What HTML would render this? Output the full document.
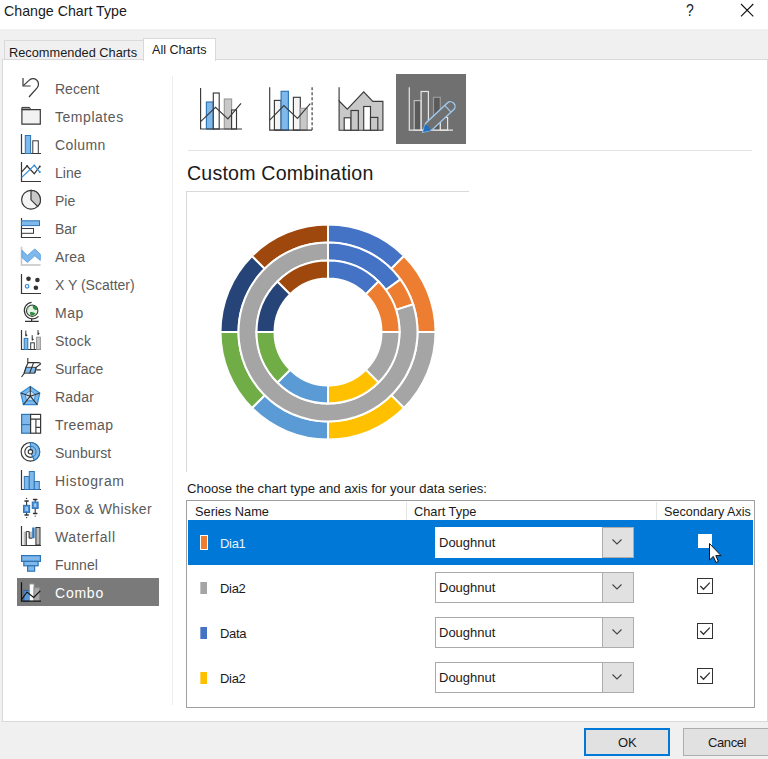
<!DOCTYPE html>
<html><head><meta charset="utf-8">
<style>
*{box-sizing:border-box}
html,body{margin:0;padding:0;width:768px;height:759px;overflow:hidden;background:#f0f0f0;font-family:"Liberation Sans",sans-serif;color:#000}
.a{position:absolute}
.t{white-space:nowrap;line-height:1}
.cat{left:55px;font-size:14px}
</style></head><body>
<div class="a" style="left:0;top:0;width:768px;height:29px;background:#fff"></div>
<div class="a t" style="left:4px;top:4px;font-size:14.2px;color:#1a1a1a">Change Chart Type</div>
<div class="a t" style="left:686px;top:2px;font-size:16.5px;color:#1a1a1a;transform:scaleX(0.85);transform-origin:0 0">?</div>
<svg class="a" style="left:740px;top:3px" width="15" height="15"><path d="M1 1L13.3 13.3M13.3 1L1 13.3" stroke="#111" stroke-width="1.1"/></svg>

<div class="a" style="left:4px;top:40px;width:140px;height:20px;background:#f0f0f0;border:1px solid #d9d9d9;border-bottom:none"></div>
<div class="a t" style="left:9px;top:47px;font-size:12.8px;color:#1a1a1a">Recommended Charts</div>

<div class="a" style="left:2px;top:59px;width:766px;height:663px;background:#fff;border:1px solid #d9d9d9"></div>
<div class="a" style="left:143px;top:38px;width:73px;height:23px;background:#fff;border:1px solid #d9d9d9;border-bottom:none"></div>
<div class="a t" style="left:152px;top:44px;font-size:12.6px;color:#1a1a1a">All Charts</div>

<div class="a" style="left:172px;top:76px;width:1px;height:629px;background:#ededed"></div>

<svg class="a" style="left:16px;top:74px" width="32" height="28" viewBox="0 0 32 28"><path d="M7 4V12H14.6" fill="none" stroke="#383838" stroke-width="1.2"/><path d="M7.4 11.6L13 6.4A5.5 5.5 0 0 1 21.3 13.6L13 23" fill="none" stroke="#383838" stroke-width="1.2"/></svg>
<div class="a t cat" style="top:82px;color:#5a5a5a;letter-spacing:0px">Recent</div>
<svg class="a" style="left:16px;top:102px" width="32" height="28" viewBox="0 0 32 28"><path d="M5.9 7.6H24.3V22.2H5.9Z" fill="#f2f2f2" stroke="#383838" stroke-width="1.2"/><path d="M5.9 5.4H13.6L14.6 7.6H5.9Z" fill="#9a9a9a" stroke="#383838" stroke-width="1"/></svg>
<div class="a t cat" style="top:110px;color:#5a5a5a;letter-spacing:0.54px">Templates</div>
<svg class="a" style="left:16px;top:130px" width="32" height="28" viewBox="0 0 32 28"><path d="M5.5 4V23.5H25" fill="none" stroke="#383838" stroke-width="1.2"/><rect x="9.3" y="5.5" width="5.3" height="18" fill="#7fb8ea" stroke="#2e75b6" stroke-width="1"/><rect x="16.8" y="10.8" width="5.5" height="12.7" fill="#fff" stroke="#383838" stroke-width="1"/></svg>
<div class="a t cat" style="top:138px;color:#5a5a5a;letter-spacing:0.42px">Column</div>
<svg class="a" style="left:16px;top:158px" width="32" height="28" viewBox="0 0 32 28"><path d="M5.5 4V23.5H25" fill="none" stroke="#383838" stroke-width="1.2"/><path d="M5.5 14.1L11.1 8L18.3 15.7L23.8 8.5" fill="none" stroke="#383838" stroke-width="1.2"/><path d="M5.5 19.6L18.3 7.4L23.8 14.1" fill="none" stroke="#2e8ad8" stroke-width="1.2"/><circle cx="11.1" cy="8" r="1" fill="#383838"/><circle cx="18.3" cy="7.4" r="1" fill="#2e8ad8"/><circle cx="23.8" cy="14.1" r="1" fill="#2e8ad8"/><circle cx="23.8" cy="8.5" r="1" fill="#383838"/></svg>
<div class="a t cat" style="top:166px;color:#5a5a5a;letter-spacing:0px">Line</div>
<svg class="a" style="left:16px;top:186px" width="32" height="28" viewBox="0 0 32 28"><circle cx="15" cy="13.8" r="9.4" fill="#f4f4f4" stroke="#383838" stroke-width="1.2"/><path d="M15 4.4A9.4 9.4 0 0 1 21.6 20.5L15 13.8Z" fill="#c8c8c8" stroke="#383838" stroke-width="1.2"/></svg>
<div class="a t cat" style="top:194px;color:#5a5a5a;letter-spacing:0px">Pie</div>
<svg class="a" style="left:16px;top:214px" width="32" height="28" viewBox="0 0 32 28"><path d="M5.5 4V23.5H25" fill="none" stroke="#383838" stroke-width="1.2"/><rect x="5.5" y="6.8" width="18" height="4.8" fill="#7fb8ea" stroke="#2e75b6" stroke-width="1"/><rect x="5.5" y="14.5" width="12" height="4.8" fill="#fff" stroke="#383838" stroke-width="1"/></svg>
<div class="a t cat" style="top:222px;color:#5a5a5a;letter-spacing:0px">Bar</div>
<svg class="a" style="left:16px;top:242px" width="32" height="28" viewBox="0 0 32 28"><path d="M5.5 4.8V23H24.6" fill="none" stroke="#c4c4c4" stroke-width="1.5"/><path d="M6 8.3L11.4 13.6L18.8 7L24.3 12.2V18.4L18.8 13.8L11.4 20.4L6 15.6Z" fill="#7fb8ea" stroke="#5a9fe0" stroke-width="0.9"/></svg>
<div class="a t cat" style="top:250px;color:#5a5a5a;letter-spacing:0.15px">Area</div>
<svg class="a" style="left:16px;top:270px" width="32" height="28" viewBox="0 0 32 28"><path d="M5.5 4V23.5H25" fill="none" stroke="#383838" stroke-width="1.2"/><circle cx="12.5" cy="8.8" r="2.3" fill="#333"/><circle cx="21.4" cy="10" r="2.3" fill="#333"/><circle cx="19.9" cy="17.7" r="2.3" fill="#333"/><circle cx="11.1" cy="16.3" r="1.8" fill="#fff" stroke="#2e8ad8" stroke-width="1.2"/></svg>
<div class="a t cat" style="top:278px;color:#5a5a5a;letter-spacing:0px">X Y (Scatter)</div>
<svg class="a" style="left:16px;top:298px" width="32" height="28" viewBox="0 0 32 28"><path d="M15.6 4.3A8.3 8.3 0 1 0 22.5 18.4" fill="none" stroke="#333" stroke-width="1.2"/><circle cx="16.2" cy="12.7" r="5.7" fill="#e4f2e4" stroke="#2f3b2f" stroke-width="1.1"/><path d="M16.5 7.6Q20.5 7.8 21.3 11.4Q19 12.8 17.2 10.6Z" fill="#2f8a3f"/><path d="M13.8 14.2Q17 13.2 19.6 15.6Q17.5 18 14.6 17.4Z" fill="#2f8a3f"/><path d="M11 10.5Q12 8.5 13 8.2L12 12Z" fill="#6fb37a"/><path d="M9 23.4H22.7M15.6 20.5V23.4" stroke="#333" stroke-width="1.2"/></svg>
<div class="a t cat" style="top:306px;color:#5a5a5a;letter-spacing:0.5px">Map</div>
<svg class="a" style="left:16px;top:326px" width="32" height="28" viewBox="0 0 32 28"><path d="M5.5 4V23.5H25" fill="none" stroke="#383838" stroke-width="1.2"/><rect x="8.2" y="12.4" width="3.6" height="11.1" fill="#7fb8ea" stroke="#2e75b6" stroke-width="1"/><rect x="14.7" y="16.8" width="3.6" height="6.7" fill="#fff" stroke="#383838" stroke-width="1"/><rect x="20.6" y="11.2" width="3.8" height="12.3" fill="#c8c8c8" stroke="#999" stroke-width="1"/><path d="M9.8 4.6V10.2M16.2 9.2V14.4M22 4.2V9" fill="none" stroke="#333" stroke-width="1"/><path d="M9.8 7.8L11.6 9.2L9.8 10.4ZM16.2 12L18 13.4L16.2 14.6ZM22 6.2L23.8 7.6L22 8.8Z" fill="#333"/></svg>
<div class="a t cat" style="top:334px;color:#5a5a5a;letter-spacing:0.25px">Stock</div>
<svg class="a" style="left:16px;top:354px" width="32" height="28" viewBox="0 0 32 28"><path d="M11.8 4V9" stroke="#333" stroke-width="1.1"/><path d="M10.3 13.3H20.2L18.8 19.2H8.1Z" fill="#7fb8ea" stroke="#333" stroke-width="0.9"/><path d="M8.1 19.2Q9.5 13 12.2 8.6H22.2Q24.6 8.8 24.6 10L20.2 13.3L18.8 19.2" fill="none" stroke="#333" stroke-width="1.1"/><path d="M17.6 8.6L13.6 19.2M20.2 15.9H24.8M8.4 19.2L5.5 23" fill="none" stroke="#333" stroke-width="1.1"/></svg>
<div class="a t cat" style="top:362px;color:#5a5a5a;letter-spacing:0px">Surface</div>
<svg class="a" style="left:16px;top:382px" width="32" height="28" viewBox="0 0 32 28"><polygon points="14.3,4.4 23.8,11 21.2,22.6 7.4,22.6 4.8,11" fill="#7fb8ea" stroke="#2e8ad8" stroke-width="1.2"/><polygon points="14.3,8.6 19.6,12.4 18,18.8 10.6,18.8 9,12.4" fill="#fff" fill-opacity="0.55" stroke="#2e8ad8" stroke-width="0.9"/><path d="M14.3 14.2L14.3 4.4M14.3 14.2L23.8 11M14.3 14.2L21.2 22.6M14.3 14.2L7.4 22.6M14.3 14.2L4.8 11" stroke="#333" stroke-width="1.1"/></svg>
<div class="a t cat" style="top:390px;color:#5a5a5a;letter-spacing:0.2px">Radar</div>
<svg class="a" style="left:16px;top:410px" width="32" height="28" viewBox="0 0 32 28"><rect x="5.6" y="4.4" width="9" height="18.8" fill="#7fb8ea" stroke="#2e75b6" stroke-width="1.2"/><path d="M5.6 14.6H14.6" stroke="#2e75b6" stroke-width="1.1"/><rect x="14.6" y="4.4" width="10" height="18.8" fill="#fff" stroke="#383838" stroke-width="1.2"/><path d="M14.6 9.1H24.6M19.9 9.1V23.2M19.9 17.4H24.6" stroke="#383838" stroke-width="1.1"/></svg>
<div class="a t cat" style="top:418px;color:#5a5a5a;letter-spacing:0.42px">Treemap</div>
<svg class="a" style="left:16px;top:438px" width="32" height="28" viewBox="0 0 32 28"><circle cx="14.4" cy="13.8" r="9.3" fill="#fff" stroke="#333" stroke-width="1.2"/><circle cx="14.4" cy="13.8" r="5.6" fill="none" stroke="#333" stroke-width="1.1"/><path d="M14.40 4.50A9.3 9.3 0 0 1 18.33 22.23L15.33 15.79A2.2 2.2 0 0 0 14.40 11.60Z" fill="#7fb8ea" stroke="#2e75b6" stroke-width="1.1"/><path d="M14.40 8.20A5.6 5.6 0 0 1 16.77 18.88" fill="none" stroke="#2e75b6" stroke-width="1"/><circle cx="14.4" cy="13.8" r="2.2" fill="#fff" stroke="#333" stroke-width="1.1"/></svg>
<div class="a t cat" style="top:446px;color:#5a5a5a;letter-spacing:0px">Sunburst</div>
<svg class="a" style="left:16px;top:466px" width="32" height="28" viewBox="0 0 32 28"><path d="M5.5 4V23.5H25" fill="none" stroke="#383838" stroke-width="1.2"/><rect x="8.3" y="10.5" width="5" height="13" fill="#7fb8ea" stroke="#2e75b6" stroke-width="1"/><rect x="13.3" y="5.5" width="5" height="18" fill="#7fb8ea" stroke="#2e75b6" stroke-width="1"/><rect x="18.3" y="15.5" width="5" height="8" fill="#7fb8ea" stroke="#2e75b6" stroke-width="1"/></svg>
<div class="a t cat" style="top:474px;color:#5a5a5a;letter-spacing:0.65px">Histogram</div>
<svg class="a" style="left:16px;top:494px" width="32" height="28" viewBox="0 0 32 28"><path d="M10.6 7V11.4M10.6 18.4V21M19.2 5.5V8.1M19.2 14.4V19.5" stroke="#333" stroke-width="1.1"/><path d="M9 7H12.2M9 21H12.2M17.6 5.5H20.8M17.6 19.5H20.8" stroke="#333" stroke-width="1.6" stroke-linecap="round"/><circle cx="10.6" cy="4.4" r="0.7" fill="#333"/><circle cx="10.6" cy="23.6" r="0.7" fill="#333"/><circle cx="19.2" cy="22.1" r="0.7" fill="#333"/><rect x="7.6" y="11.4" width="6" height="7" fill="#4a90d9" stroke="#2e75b6" stroke-width="1.1"/><rect x="9.3" y="12.8" width="2.6" height="4.2" fill="#9cc8f0"/><rect x="16.3" y="8.1" width="5.8" height="6.3" fill="#4a90d9" stroke="#2e75b6" stroke-width="1.1"/><rect x="18" y="9.5" width="2.4" height="3.5" fill="#9cc8f0"/></svg>
<div class="a t cat" style="top:502px;color:#5a5a5a;letter-spacing:0.41px">Box &amp; Whisker</div>
<svg class="a" style="left:16px;top:522px" width="32" height="28" viewBox="0 0 32 28"><path d="M5.5 4V23.5H25" fill="none" stroke="#383838" stroke-width="1.2"/><rect x="7.6" y="9.6" width="2.6" height="13.4" fill="#bdbdbd"/><rect x="12.6" y="9.6" width="3.7" height="6.6" fill="#bdbdbd"/><path d="M10.3 23V9.6H13.2V16.2H16.4" stroke="#333" fill="none" stroke-width="1"/><rect x="16.2" y="5.5" width="2.4" height="10.7" fill="#2e75b6"/><rect x="19.9" y="5.5" width="4.1" height="17.5" fill="#bdbdbd" stroke="#333" stroke-width="1"/></svg>
<div class="a t cat" style="top:530px;color:#5a5a5a;letter-spacing:0.66px">Waterfall</div>
<svg class="a" style="left:16px;top:550px" width="32" height="28" viewBox="0 0 32 28"><rect x="5.6" y="5.6" width="18.8" height="5.8" fill="#7fb8ea" stroke="#2e75b6" stroke-width="1.2"/><rect x="7.8" y="11.4" width="14.3" height="4.4" fill="#7fb8ea" stroke="#2e75b6" stroke-width="1.2"/><rect x="11.6" y="15.8" width="7" height="5.4" fill="#7fb8ea" stroke="#2e75b6" stroke-width="1.2"/></svg>
<div class="a t cat" style="top:558px;color:#5a5a5a;letter-spacing:0px">Funnel</div>
<div class="a" style="left:17px;top:578px;width:142px;height:28px;background:#7a7a7a"></div>
<svg class="a" style="left:16px;top:578px" width="32" height="28" viewBox="0 0 32 28"><rect x="8" y="12.4" width="5.4" height="10.8" fill="#5b9bd5" stroke="#2e5fa0" stroke-width="0.9"/><rect x="13.6" y="6" width="4.4" height="17.2" fill="#fff" stroke="#9a9a9a" stroke-width="0.9"/><rect x="18" y="9.8" width="5.4" height="13.4" fill="#a8a8a8" stroke="#8a8a8a" stroke-width="0.9"/><path d="M5.5 4.3V23.2H24.9" fill="none" stroke="#111" stroke-width="1.2"/><path d="M5.3 22L11 14L17.7 19.5L24.3 12.9" fill="none" stroke="#111" stroke-width="1.2"/></svg>
<div class="a t cat" style="top:586px;color:#fff;letter-spacing:0.77px">Combo</div>

<!-- top chart icons -->
<svg class="a" style="left:0;top:0" width="768" height="160">
<g stroke="#3a3a3a" stroke-width="1.15" fill="none">
<rect x="206.4" y="102" width="6.9" height="27" fill="#7fb8ea" stroke="#2e75b6"/>
<rect x="213.3" y="93" width="5.9" height="36" fill="#fff"/>
<rect x="224.3" y="99" width="7.3" height="30" fill="#c8c8c8" stroke="#999"/>
<rect x="231.6" y="110" width="4.9" height="19" fill="#fff"/>
<path d="M200.6 88V129H242"/>
<path d="M200.6 121.6L215.5 107.3L227.9 118.8L241 103.3"/>

<rect x="274.4" y="100.4" width="6.7" height="29.7" fill="#f4f4f4"/>
<rect x="281.1" y="91.3" width="7.3" height="38.8" fill="#7fb8ea" stroke="#2e75b6"/>
<rect x="293.4" y="97.3" width="6.9" height="32.8" fill="#f4f4f4"/>
<rect x="300.3" y="108.3" width="6.9" height="21.8" fill="#c8c8c8" stroke="#999"/>
<path d="M269.7 87.3V130.1H312.1"/>
<path d="M312.1 87.3V130.1" stroke-dasharray="3 2"/>
<path d="M269.7 120.1L283.9 105.5L297.5 118.3L310.3 103.7"/>

<path d="M339.1 101L347.3 109.2L363.7 91.9L372.8 101.4H382.9V130.2H339.1Z" fill="#c8c8c8"/>
<path d="M339.1 87.3V101"/>
<rect x="344.2" y="117.8" width="6.8" height="12.4" fill="#fff"/>
<rect x="351" y="110.5" width="7.3" height="19.7" fill="#c8c8c8"/>
<rect x="363.7" y="106.5" width="6.8" height="23.7" fill="#fff"/>
<rect x="370.5" y="117.4" width="7.3" height="12.8" fill="#c8c8c8"/>
</g>
<rect x="396" y="74" width="70" height="70" fill="#707070"/>
<g stroke="#e6e6e6" stroke-width="1.2" fill="none">
<rect x="414.2" y="100.6" width="6.9" height="29.6" fill="#5a5a5a" stroke="#bdbdbd"/>
<rect x="421.1" y="91.5" width="7.3" height="38.7"/>
<rect x="433.5" y="97.3" width="6.8" height="32.9" fill="#5a5a5a" stroke="#9a9a9a"/>
<rect x="440.3" y="117.4" width="7.3" height="12.8"/>
<path d="M409.3 87.3V130.2H453"/>
</g>
<g transform="translate(423 132) rotate(-43)">
<path d="M0 0L8 -4.6H37.5A4.6 4.6 0 0 1 37.5 4.6H8Z" fill="#707070" stroke="#9fcaf0" stroke-width="1.4"/>
<path d="M0.8 0L6.5 -3.6Q8.6 0 6.5 3.6Z" fill="#1f6fc5" stroke="#1f6fc5" stroke-width="0.8"/>
<path d="M34 -4.6V4.6" stroke="#9fcaf0" stroke-width="1.2"/>
</g>
<path d="M188 150.5H752" stroke="#e3e3e3" stroke-width="1"/>
</svg>

<div class="a t" style="left:187px;top:164px;font-size:19.6px;letter-spacing:0.2px;color:#1a1a1a">Custom Combination</div>
<div class="a" style="left:186px;top:191px;width:283px;height:1px;background:#d9d9d9"></div>
<div class="a" style="left:186px;top:191px;width:1px;height:281px;background:#d9d9d9"></div>

<svg class="a" style="left:0;top:0" width="768" height="480">
<g stroke="#fff" stroke-width="2">
<path d="M328.00 224.50A107.5 107.5 0 0 1 404.01 255.99L391.29 268.71A89.5 89.5 0 0 0 328.00 242.50Z" fill="#4472C4"/>
<path d="M404.01 255.99A107.5 107.5 0 0 1 435.50 332.00L417.50 332.00A89.5 89.5 0 0 0 391.29 268.71Z" fill="#ED7D31"/>
<path d="M435.50 332.00A107.5 107.5 0 0 1 404.01 408.01L391.29 395.29A89.5 89.5 0 0 0 417.50 332.00Z" fill="#A5A5A5"/>
<path d="M404.01 408.01A107.5 107.5 0 0 1 328.00 439.50L328.00 421.50A89.5 89.5 0 0 0 391.29 395.29Z" fill="#FFC000"/>
<path d="M328.00 439.50A107.5 107.5 0 0 1 251.99 408.01L264.71 395.29A89.5 89.5 0 0 0 328.00 421.50Z" fill="#5B9BD5"/>
<path d="M251.99 408.01A107.5 107.5 0 0 1 220.50 332.00L238.50 332.00A89.5 89.5 0 0 0 264.71 395.29Z" fill="#70AD47"/>
<path d="M220.50 332.00A107.5 107.5 0 0 1 251.99 255.99L264.71 268.71A89.5 89.5 0 0 0 238.50 332.00Z" fill="#264478"/>
<path d="M251.99 255.99A107.5 107.5 0 0 1 328.00 224.50L328.00 242.50A89.5 89.5 0 0 0 264.71 268.71Z" fill="#9E480E"/>
<path d="M328.00 242.50A89.5 89.5 0 0 1 400.41 279.39L385.84 289.97A71.5 71.5 0 0 0 328.00 260.50Z" fill="#4472C4"/>
<path d="M400.41 279.39A89.5 89.5 0 0 1 413.12 304.34L396.00 309.91A71.5 71.5 0 0 0 385.84 289.97Z" fill="#ED7D31"/>
<path d="M413.12 304.34A89.5 89.5 0 1 1 328.00 242.50L328.00 260.50A71.5 71.5 0 1 0 396.00 309.91Z" fill="#A5A5A5"/>
<path d="M328.00 260.50A71.5 71.5 0 0 1 378.56 281.44L365.83 294.17A53.5 53.5 0 0 0 328.00 278.50Z" fill="#4472C4"/>
<path d="M378.56 281.44A71.5 71.5 0 0 1 399.50 332.00L381.50 332.00A53.5 53.5 0 0 0 365.83 294.17Z" fill="#ED7D31"/>
<path d="M399.50 332.00A71.5 71.5 0 0 1 378.56 382.56L365.83 369.83A53.5 53.5 0 0 0 381.50 332.00Z" fill="#A5A5A5"/>
<path d="M378.56 382.56A71.5 71.5 0 0 1 328.00 403.50L328.00 385.50A53.5 53.5 0 0 0 365.83 369.83Z" fill="#FFC000"/>
<path d="M328.00 403.50A71.5 71.5 0 0 1 277.44 382.56L290.17 369.83A53.5 53.5 0 0 0 328.00 385.50Z" fill="#5B9BD5"/>
<path d="M277.44 382.56A71.5 71.5 0 0 1 256.50 332.00L274.50 332.00A53.5 53.5 0 0 0 290.17 369.83Z" fill="#70AD47"/>
<path d="M256.50 332.00A71.5 71.5 0 0 1 277.44 281.44L290.17 294.17A53.5 53.5 0 0 0 274.50 332.00Z" fill="#264478"/>
<path d="M277.44 281.44A71.5 71.5 0 0 1 328.00 260.50L328.00 278.50A53.5 53.5 0 0 0 290.17 294.17Z" fill="#9E480E"/>
</g>
</svg>

<div class="a t" style="left:187px;top:482px;font-size:13.1px;color:#1a1a1a">Choose the chart type and axis for your data series:</div>
<div class="a" style="left:186px;top:500px;width:569px;height:208px;border:1px solid #a0a0a0;background:#fff"></div>
<div class="a" style="left:406px;top:502px;width:1px;height:18px;background:#e5e5e5"></div>
<div class="a" style="left:656px;top:502px;width:1px;height:18px;background:#e5e5e5"></div>
<div class="a t" style="left:195px;top:506px;font-size:12.8px;color:#1a1a1a">Series Name</div>
<div class="a t" style="left:414px;top:506px;font-size:12.8px;color:#1a1a1a">Chart Type</div>
<div class="a t" style="left:664px;top:506px;font-size:12.6px;color:#1a1a1a">Secondary Axis</div>

<div class="a" style="left:188px;top:520px;width:565px;height:45px;background:#0078d7"></div>
<div class="a" style="left:200px;top:535px;width:8px;height:15px;background:#ED7D31;border:1px solid #fff"></div>
<div class="a t" style="left:220px;top:537px;font-size:13px;letter-spacing:-0.3px;color:#e8f3fc">Dia1</div>
<div class="a" style="left:435px;top:527px;width:199px;height:31px;background:#fff;border:1px solid #fff"></div>
<div class="a" style="left:602px;top:527px;width:32px;height:31px;background:#e1e1e1;border:1px solid #adadad"></div>
<svg class="a" style="left:611px;top:538px" width="12" height="8"><path d="M1.5 1.5L6 6L10.5 1.5" fill="none" stroke="#444" stroke-width="1.1"/></svg>
<div class="a t" style="left:439px;top:536px;font-size:13px;color:#1a1a1a">Doughnut</div>
<div class="a" style="left:698px;top:534px;width:14px;height:14px;background:#fff"></div>
<div class="a" style="left:200px;top:582px;width:7px;height:12px;background:#A5A5A5;border-left:1px solid rgba(255,255,255,0.35)"></div>
<div class="a t" style="left:220px;top:582px;font-size:13px;letter-spacing:-0.3px;color:#1a1a1a">Dia2</div>
<div class="a" style="left:435px;top:572px;width:199px;height:31px;background:#fff;border:1px solid #a9a9a9"></div>
<div class="a" style="left:602px;top:572px;width:32px;height:31px;background:#e1e1e1;border:1px solid #adadad"></div>
<svg class="a" style="left:611px;top:583px" width="12" height="8"><path d="M1.5 1.5L6 6L10.5 1.5" fill="none" stroke="#444" stroke-width="1.1"/></svg>
<div class="a t" style="left:439px;top:581px;font-size:13px;color:#1a1a1a">Doughnut</div>
<div class="a" style="left:697px;top:578px;width:16px;height:16px;background:#fff;border:1px solid #333"></div>
<svg class="a" style="left:697px;top:578px" width="16" height="16"><path d="M3.3 8L6.5 11.2L12.8 4.6" fill="none" stroke="#333" stroke-width="1.3"/></svg>
<div class="a" style="left:200px;top:627px;width:7px;height:12px;background:#4472C4;border-left:1px solid rgba(255,255,255,0.35)"></div>
<div class="a t" style="left:220px;top:627px;font-size:13px;letter-spacing:-0.3px;color:#1a1a1a">Data</div>
<div class="a" style="left:435px;top:617px;width:199px;height:31px;background:#fff;border:1px solid #a9a9a9"></div>
<div class="a" style="left:602px;top:617px;width:32px;height:31px;background:#e1e1e1;border:1px solid #adadad"></div>
<svg class="a" style="left:611px;top:628px" width="12" height="8"><path d="M1.5 1.5L6 6L10.5 1.5" fill="none" stroke="#444" stroke-width="1.1"/></svg>
<div class="a t" style="left:439px;top:626px;font-size:13px;color:#1a1a1a">Doughnut</div>
<div class="a" style="left:697px;top:623px;width:16px;height:16px;background:#fff;border:1px solid #333"></div>
<svg class="a" style="left:697px;top:623px" width="16" height="16"><path d="M3.3 8L6.5 11.2L12.8 4.6" fill="none" stroke="#333" stroke-width="1.3"/></svg>
<div class="a" style="left:200px;top:672px;width:7px;height:12px;background:#FFC000;border-left:1px solid rgba(255,255,255,0.35)"></div>
<div class="a t" style="left:220px;top:672px;font-size:13px;letter-spacing:-0.3px;color:#1a1a1a">Dia2</div>
<div class="a" style="left:435px;top:662px;width:199px;height:31px;background:#fff;border:1px solid #a9a9a9"></div>
<div class="a" style="left:602px;top:662px;width:32px;height:31px;background:#e1e1e1;border:1px solid #adadad"></div>
<svg class="a" style="left:611px;top:673px" width="12" height="8"><path d="M1.5 1.5L6 6L10.5 1.5" fill="none" stroke="#444" stroke-width="1.1"/></svg>
<div class="a t" style="left:439px;top:671px;font-size:13px;color:#1a1a1a">Doughnut</div>
<div class="a" style="left:697px;top:668px;width:16px;height:16px;background:#fff;border:1px solid #333"></div>
<svg class="a" style="left:697px;top:668px" width="16" height="16"><path d="M3.3 8L6.5 11.2L12.8 4.6" fill="none" stroke="#333" stroke-width="1.3"/></svg>

<svg class="a" style="left:706px;top:542px" width="16" height="24"><path d="M3.5 1.5V18L7.3 14.4L10 20.5L12.4 19.4L9.8 13.6H15Z" fill="#fff" stroke="#111" stroke-width="1"/></svg>

<div class="a" style="left:584px;top:728px;width:86px;height:28px;background:#e1e1e1;border:2px solid #0078d7"></div>
<div class="a t" style="left:618px;top:736px;font-size:13px;color:#1a1a1a">OK</div>
<div class="a" style="left:683px;top:728px;width:90px;height:28px;background:#e1e1e1;border:1px solid #adadad"></div>
<div class="a t" style="left:708px;top:736px;font-size:13px;letter-spacing:-0.4px;color:#1a1a1a">Cancel</div>
</body></html>
